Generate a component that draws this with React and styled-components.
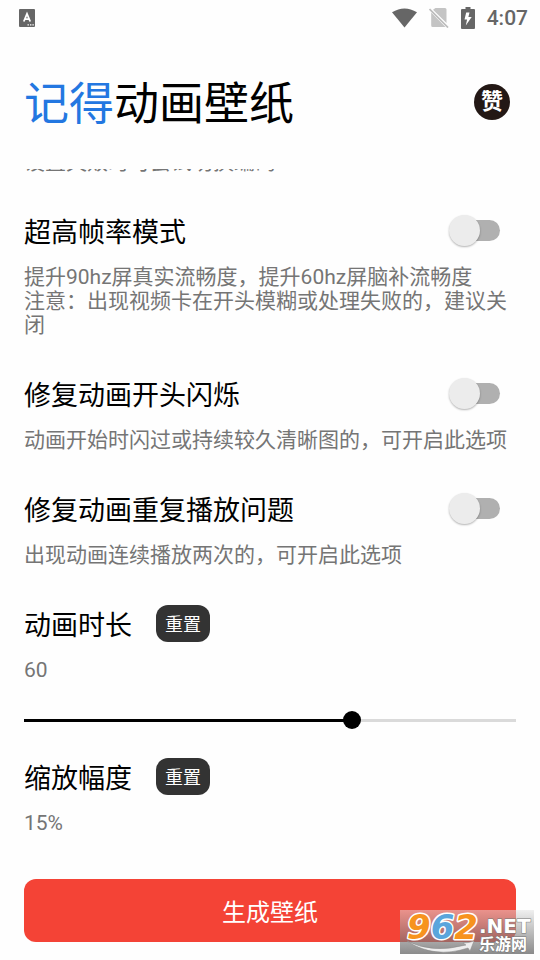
import React, { useState } from "react";
import styled, { createGlobalStyle } from "styled-components";

const GlobalStyle = createGlobalStyle`
  * {
    box-sizing: border-box;
  }

  body {
    margin: 0;
    background-color: #fefefe;
    color: #000;
    font-family: Roboto, "Noto Sans CJK SC", sans-serif;
  }

  button,
  input {
    margin: 0;
    font-family: inherit;
  }
`;

const Screen = styled.div`
  position: relative;
  display: flex;
  flex-direction: column;
  height: 100vh;
`;

const StatusBar = styled.div`
  display: flex;
  flex: none;
  align-items: center;
  justify-content: space-between;
  height: 36px;
  padding: 0 12px 0 19px;
  color: #666;
`;

const StatusIcons = styled.div`
  display: flex;
  align-items: center;
  gap: 12px;
`;

const Clock = styled.time`
  font-size: 21px;
  font-weight: 500;
  line-height: 24px;
`;

const Header = styled.header`
  display: flex;
  flex: none;
  align-items: center;
  justify-content: space-between;
  height: 133px;
  padding: 0 30px 2px 24px;
`;

const Title = styled.h1`
  margin: 0;
  padding-top: 6px;
  font-size: 45px;
  font-weight: 400;
  line-height: 60px;
`;

const Accent = styled.span`
  color: #2377e1;
`;

const LikeButton = styled.button`
  width: 36px;
  height: 36px;
  padding: 0;
  border: 0;
  border-radius: 50%;
  background-color: #231815;
  color: #fff;
  font-size: 22px;
  font-weight: 700;
  line-height: 36px;
`;

/* column-reverse keeps the list scrolled to its end */
const Scroller = styled.main`
  display: flex;
  flex: 1;
  flex-direction: column-reverse;
  min-height: 0;
  overflow-y: auto;
  scrollbar-width: none;
`;

const Settings = styled.div`
  display: flex;
  flex-direction: column;
  gap: 38px;
  padding: 0 24px 24px;
`;

const Setting = styled.section`
  display: flex;
  flex-direction: column;
`;

const SettingRow = styled.div`
  display: flex;
  align-items: center;
  justify-content: ${(props) => (props.$spread ? "space-between" : "flex-start")};
  gap: 24px;
  height: 37px;
  margin-bottom: 16px;
  padding-right: 16px;
`;

const SettingName = styled.label`
  padding-top: 4px;
  font-size: 27px;
  line-height: 36px;
`;

const Description = styled.p`
  margin: 0;
  color: #757575;
  font-size: 21px;
  line-height: 24px;
  white-space: pre-line;
`;

const Switch = styled.input`
  display: grid;
  flex: none;
  align-items: center;
  width: 51px;
  height: 31px;
  appearance: none;

  &::before,
  &::after {
    content: "";
    grid-area: 1 / 1;
  }

  &::before {
    height: 21px;
    margin-left: 6px;
    border-radius: 11px;
    background-color: #b0b0b0;
  }

  &::after {
    width: 31px;
    height: 31px;
    border-radius: 50%;
    background-color: #ececec;
    box-shadow: 0 1px 2px rgba(0, 0, 0, 0.3);
  }

  &:checked::after {
    justify-self: end;
    background-color: #2377e1;
  }
`;

const ResetButton = styled.button`
  height: 37px;
  padding: 2px 9px 0;
  border: 0;
  border-radius: 12px;
  background-color: #333;
  color: #fff;
  font-size: 18px;
  line-height: 35px;
`;

/* the input reaches past the visible line by half a thumb on each side */
const Slider = styled.input`
  width: calc(100% + 18px);
  height: 20px;
  margin: 28px -9px -10px;
  background: none;
  appearance: none;

  &::-webkit-slider-runnable-track {
    height: 3px;
    background: linear-gradient(
      to right,
      transparent 9px,
      #000 9px,
      #000 var(--filled),
      #dadada var(--filled),
      #dadada calc(100% - 9px),
      transparent calc(100% - 9px)
    );
  }

  &::-webkit-slider-thumb {
    width: 18px;
    height: 18px;
    margin-top: -8px;
    border-radius: 50%;
    background-color: #000;
    appearance: none;
  }
`;

const Footer = styled.footer`
  flex: none;
  padding: 20px 24px 18px;
`;

const GenerateButton = styled.button`
  width: 100%;
  height: 63px;
  border: 0;
  border-radius: 12px;
  background-color: #f44336;
  color: #fff;
  font-size: 24px;
`;

const Watermark = styled.div`
  position: absolute;
  right: 6px;
  bottom: 6px;
  width: 134px;
  height: 44px;
  background: linear-gradient(rgba(225, 225, 225, 0.5), rgba(90, 90, 90, 0.7));
  pointer-events: none;

  svg {
    display: block;
    overflow: visible;
  }
`;

const KeyboardIcon = () => (
  <svg width="16" height="18" viewBox="0 0 16 18">
    <rect width="16" height="18" rx="1" fill="#666" />
    <path d="M4.8 12.5 8 4.8l3.2 7.7M6 10.2h4" fill="none" stroke="#fff" strokeWidth="1.8" />
    <path d="M8.5 15.8h1.4M11 15.8h1.4M13.4 15.8h1.4" stroke="#fff" strokeWidth="1.2" />
  </svg>
);

const WifiIcon = () => (
  <svg width="25" height="20" viewBox="0 0 26 20">
    <path d="M0 4Q13-4 26 4L13 20Z" fill="#666" />
  </svg>
);

const NoSimIcon = () => (
  <svg width="20" height="20" viewBox="0 0 20 20">
    <path d="M6.5 0H16q1.500 0 1.500 1.500V15L4 1.800ZM2.200 4.500 16.500 19H3.700q-1.500 0-1.500-1.500Z" fill="#c4c4c4" />
    <path d="m.5 1 18.500 18.500" stroke="#bcbcbc" strokeWidth="1.700" />
  </svg>
);

const BatteryIcon = () => (
  <svg width="14" height="22" viewBox="0 0 14 22">
    <path d="M4.500 0h5v2H13q1 0 1 1v18q0 1-1 1H1q-1 0-1-1V3q0-1 1-1h3.500Z" fill="#666" />
    <path d="M8.500 5.500H5.200L3.500 12.500h2.600L4.800 18.500l5.900-8.500H7.400Z" fill="#fff" />
  </svg>
);

const SiteLogo = () => (
  <svg width="134" height="44" viewBox="0 0 134 44">
    <path
      d="M7 31Q32 44 66 35L63 33Q69 33 74 31L70 41 68 38Q34 49 7 31Z"
      fill="#eee"
      stroke="#888"
      strokeWidth="0.5"
    />
    <text
      x="7"
      y="29"
      fontFamily="DejaVu Sans, sans-serif"
      fontSize="34"
      fontWeight="700"
      fontStyle="italic"
      fill="#f7931e"
      stroke="#fff"
      strokeWidth="3"
      strokeLinejoin="round"
      paintOrder="stroke"
    >
      9<tspan fill="#5aa5dc">6</tspan>2
    </text>
    <g fill="#fff" stroke="#777" strokeWidth="1" paintOrder="stroke" fontWeight="700">
      <text x="79" y="23" fontFamily="DejaVu Sans, sans-serif" fontSize="20">.NET</text>
      <text x="79" y="40" fontFamily="Noto Sans CJK SC, sans-serif" fontSize="16">乐游网</text>
    </g>
  </svg>
);

const SwitchSetting = ({ id, name, description }) => (
  <Setting>
    <SettingRow $spread>
      <SettingName htmlFor={id}>{name}</SettingName>
      <Switch id={id} type="checkbox" />
    </SettingRow>
    <Description>{description}</Description>
  </Setting>
);

const App = () => {
  const [duration, setDuration] = useState(60);
  const [scale, setScale] = useState(15);
  const filled = duration / 90;

  return (
    <Screen lang="zh-CN">
      <GlobalStyle />
      <StatusBar>
        <KeyboardIcon />
        <StatusIcons>
          <WifiIcon />
          <NoSimIcon />
          <BatteryIcon />
          <Clock>4:07</Clock>
        </StatusIcons>
      </StatusBar>

      <Header>
        <Title>
          <Accent>记得</Accent>动画壁纸
        </Title>
        <LikeButton type="button">赞</LikeButton>
      </Header>

      <Scroller>
        <Settings>
          <Description>设置失败时可尝试切换编码</Description>
          <SwitchSetting
            id="high-fps"
            name="超高帧率模式"
            description={
              "提升90hz屏真实流畅度，提升60hz屏脑补流畅度\n注意：出现视频卡在开头模糊或处理失败的，建议关闭"
            }
          />
          <SwitchSetting
            id="fix-flash"
            name="修复动画开头闪烁"
            description="动画开始时闪过或持续较久清晰图的，可开启此选项"
          />
          <SwitchSetting
            id="fix-repeat"
            name="修复动画重复播放问题"
            description="出现动画连续播放两次的，可开启此选项"
          />
          <Setting>
            <SettingRow>
              <SettingName htmlFor="duration">动画时长</SettingName>
              <ResetButton type="button" onClick={() => setDuration(60)}>重置</ResetButton>
            </SettingRow>
            <Description>{duration}</Description>
            <Slider
              id="duration"
              type="range"
              min="0"
              max="90"
              value={duration}
              onChange={(e) => setDuration(Number(e.target.value))}
              style={{ "--filled": `calc(9px + (100% - 18px) * ${filled})` }}
            />
          </Setting>
          <Setting>
            <SettingRow>
              <SettingName as="span">缩放幅度</SettingName>
              <ResetButton type="button" onClick={() => setScale(15)}>重置</ResetButton>
            </SettingRow>
            <Description>{scale}%</Description>
          </Setting>
        </Settings>
      </Scroller>

      <Footer>
        <GenerateButton type="button">生成壁纸</GenerateButton>
      </Footer>

      <Watermark>
        <SiteLogo />
      </Watermark>
    </Screen>
  );
};

export default App;
